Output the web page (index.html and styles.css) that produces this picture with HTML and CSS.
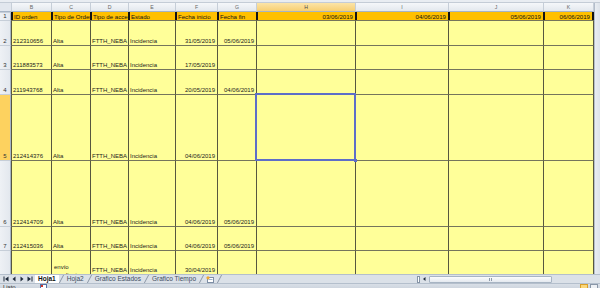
FILE: index.html
```html
<!DOCTYPE html>
<html lang="es">
<head>
<meta charset="utf-8">
<title>Hoja1</title>
<link rel="stylesheet" href="styles.css">
</head>
<body>
<div class="app">
  <div class="topstrip"></div>
  <div class="main">
    <div class="sheet">
      <div class="corner"></div>
      <div class="ch">B</div><div class="ch">C</div><div class="ch">D</div><div class="ch">E</div><div class="ch">F</div><div class="ch">G</div><div class="ch sel">H</div><div class="ch">I</div><div class="ch">J</div><div class="ch last">K</div>

      <div class="rh first">1</div>
      <div class="hd">ID orden</div><div class="hd">Tipo de Orden</div><div class="hd">Tipo de acceso</div><div class="hd">Estado</div><div class="hd">Fecha inicio</div><div class="hd">Fecha fin</div><div class="hd r">03/06/2019</div><div class="hd r">04/06/2019</div><div class="hd r">05/06/2019</div><div class="hd r last">06/06/2019</div>

      <div class="rh">2</div>
      <div class="c">212310656</div><div class="c">Alta</div><div class="c">FTTH_NEBA</div><div class="c">Incidencia</div><div class="c r">31/05/2019</div><div class="c r">05/06/2019</div><div class="c"></div><div class="c"></div><div class="c"></div><div class="c last"></div>

      <div class="rh">3</div>
      <div class="c">211883573</div><div class="c">Alta</div><div class="c">FTTH_NEBA</div><div class="c">Incidencia</div><div class="c r">17/05/2019</div><div class="c r"></div><div class="c"></div><div class="c"></div><div class="c"></div><div class="c last"></div>

      <div class="rh">4</div>
      <div class="c">211943768</div><div class="c">Alta</div><div class="c">FTTH_NEBA</div><div class="c">Incidencia</div><div class="c r">20/05/2019</div><div class="c r">04/06/2019</div><div class="c"></div><div class="c"></div><div class="c"></div><div class="c last"></div>

      <div class="rh sel">5</div>
      <div class="c">212414376</div><div class="c">Alta</div><div class="c">FTTH_NEBA</div><div class="c">Incidencia</div><div class="c r">04/06/2019</div><div class="c r"></div><div class="c selc"></div><div class="c"></div><div class="c"></div><div class="c last"></div>

      <div class="rh">6</div>
      <div class="c">212414709</div><div class="c">Alta</div><div class="c">FTTH_NEBA</div><div class="c">Incidencia</div><div class="c r">04/06/2019</div><div class="c r">05/06/2019</div><div class="c"></div><div class="c"></div><div class="c"></div><div class="c last"></div>

      <div class="rh">7</div>
      <div class="c">212415036</div><div class="c">Alta</div><div class="c">FTTH_NEBA</div><div class="c">Incidencia</div><div class="c r">04/06/2019</div><div class="c r">05/06/2019</div><div class="c"></div><div class="c"></div><div class="c"></div><div class="c last"></div>

      <div class="rh">8</div>
      <div class="c top"></div><div class="c top wrap">envío<br>pendiente</div><div class="c top">FTTH_NEBA</div><div class="c top">Incidencia</div><div class="c top r">30/04/2019</div><div class="c top r"></div><div class="c top"></div><div class="c top"></div><div class="c top"></div><div class="c top last"></div>
    </div>
    <div class="vscroll"></div>
  </div>

  <div class="tabbar">
    <div class="nav">
      <svg width="6" height="6" viewBox="0 0 6 6"><rect x="0.5" y="0.5" width="1" height="5" fill="#1f2b3b"/><path d="M5.5 0.5 L2 3 L5.5 5.5Z" fill="#1f2b3b"/></svg>
      <svg width="6" height="6" viewBox="0 0 6 6"><path d="M4.5 0.5 L1.5 3 L4.5 5.5Z" fill="#1f2b3b"/></svg>
      <svg width="6" height="6" viewBox="0 0 6 6"><path d="M1.5 0.5 L4.5 3 L1.5 5.5Z" fill="#1f2b3b"/></svg>
      <svg width="6" height="6" viewBox="0 0 6 6"><path d="M0.5 0.5 L4 3 L0.5 5.5Z" fill="#1f2b3b"/><rect x="4.5" y="0.5" width="1" height="5" fill="#1f2b3b"/></svg>
    </div>
    <div class="tabs">
      <span class="tab active">Hoja1</span><span class="sep"></span>
      <span class="tab">Hoja2</span><span class="sep"></span>
      <span class="tab">Grafico Estados</span><span class="sep"></span>
      <span class="tab">Grafico Tiempo</span><span class="sep"></span>
      <span class="tab newsheet"><svg width="9" height="7" viewBox="0 0 9 7"><rect x="1.5" y="1.5" width="6" height="5" fill="#fff" stroke="#7d8ea5"/><rect x="2.5" y="3" width="4" height="1" fill="#9fb4cf"/><circle cx="2" cy="1.8" r="1.6" fill="#f0a630"/></svg></span><span class="sep"></span>
    </div>
    <div class="spacer"></div>
    <div class="hscroll">
      <span class="split"></span>
      <svg class="larrow" width="5" height="6" viewBox="0 0 5 6"><path d="M3.5 1 L1 3 L3.5 5Z" fill="#1f2b3b"/></svg>
      <span class="thumb"><span class="grip"></span></span>
      <span class="track"></span>
    </div>
  </div>

  <div class="status">
    <span class="ready">Listo</span>
    <svg class="macro" width="7" height="5" viewBox="0 0 7 5"><rect x="0.5" y="0.5" width="6" height="5" fill="#fff" stroke="#5572a6"/><rect x="1" y="1" width="2" height="2" fill="#d0342c"/></svg>
    <span class="sspacer"></span>
    <span class="view on"></span><span class="view"></span>
  </div>
</div>
</body>
</html>
```
FILE: styles.css
```css
* {
  box-sizing: border-box;
  margin: 0;
  padding: 0;
}

html, body {
  width: 600px;
  height: 288px;
  overflow: hidden;
  background: #fff;
}

body {
  font-family: "Liberation Sans", Arial, sans-serif;
}

.app {
  width: 600px;
  height: 288px;
  display: flex;
  flex-direction: column;
  overflow: hidden;
}

.topstrip {
  flex: none;
  height: 3px;
  background: #e9edf2;
  border-bottom: 1px solid #c4ccd6;
}

.main {
  flex: none;
  height: 271px;
  display: flex;
}

.sheet {
  width: 594px;
  height: 271px;
  overflow: hidden;
  display: grid;
  grid-template-columns: 11px 40px 39px 38px 47px 42px 39px 99px 93px 95px 51px;
  grid-template-rows: 9px 8px 25px 24px 25px 66px 66px 24px 40px;
}

.vscroll {
  width: 6px;
  height: 271px;
  background: linear-gradient(90deg, #e9edf2, #dde3ea);
  border-left: 1px solid #b3bdca;
}

/* column headers */
.corner {
  background: #e2e7ee;
  border-bottom: 1px solid #a6b4c5;
}

.ch {
  background: linear-gradient(#f5f7fa, #e3e8ee);
  border-left: 1px solid #c6ced8;
  border-bottom: 1px solid #a6b4c5;
  color: #666;
  font-size: 5.2px;
  line-height: 6px;
  display: flex;
  align-items: center;
  justify-content: center;
}

.ch.sel {
  background: linear-gradient(#fbe4a8, #f7cf72);
  color: #4a4a4a;
}

.ch.last {
  border-right: 1px solid #c6ced8;
}

/* row headers */
.rh {
  background: linear-gradient(90deg, #eef1f5, #e3e8ee);
  border-top: 1px solid #c6ced8;
  border-right: 1px solid #a6b4c5;
  color: #333;
  font-size: 6px;
  line-height: 7px;
  display: flex;
  align-items: flex-end;
  justify-content: center;
}

.rh.first {
  align-items: center;
}

.rh.sel {
  background: #fdd25f;
}

/* row 1 headings */
.hd {
  background: #ffc000;
  border-left: 2px solid #141414;
  color: #111;
  font-size: 6.1px;
  line-height: 7px;
  display: flex;
  align-items: center;
  padding: 0 2px 0 1px;
  white-space: nowrap;
  overflow: hidden;
}

.hd.r {
  justify-content: flex-end;
}

.hd.last {
  border-right: 2px solid #141414;
}

/* body cells */
.c {
  background: #ffff99;
  border-left: 1px solid #57573f;
  border-top: 1px solid #75755c;
  color: #1c1c1c;
  font-size: 6px;
  line-height: 7px;
  display: flex;
  align-items: flex-end;
  padding: 0 2px 0 1px;
  white-space: nowrap;
  overflow: hidden;
}

.c.r {
  justify-content: flex-end;
}

.c.last {
  border-right: 1px solid #57573f;
}

.c.top {
  align-items: flex-start;
  padding-top: 16px;
}

.c.wrap {
  padding-top: 12px;
  padding-left: 2px;
  white-space: normal;
  line-height: 8px;
}

.c.selc {
  position: relative;
  z-index: 2;
  overflow: visible;
  outline: 2px solid #5d6ec8;
  outline-offset: -1px;
}

.c.selc::after {
  content: "";
  position: absolute;
  right: -2px;
  bottom: -2px;
  width: 3px;
  height: 3px;
  background: #5d6ec8;
}

/* sheet tabs */
.tabbar {
  flex: none;
  height: 9px;
  display: flex;
  align-items: stretch;
  background: #dbe1e8;
  border-top: 1px solid #b4bfcc;
  font-size: 6.5px;
}

.nav {
  width: 35px;
  display: flex;
  align-items: center;
  gap: 2px;
  padding-left: 3px;
}

.tabs {
  display: flex;
  align-items: stretch;
}

.tab {
  display: flex;
  align-items: center;
  padding: 0 3px;
  color: #3d4c60;
  line-height: 8px;
  white-space: nowrap;
}

.tab.active {
  background: #fff;
  color: #111;
  font-weight: bold;
}

.tab.newsheet {
  padding: 0 2px;
}

.sep {
  width: 1px;
  margin: 0 2px;
  background: #8c98a8;
  transform: skewX(-28deg);
}

.spacer {
  flex: 1;
}

.hscroll {
  width: 183px;
  display: flex;
  align-items: center;
}

.split {
  width: 3px;
  height: 7px;
  background: #fff;
  border: 1px solid #8594a6;
}

.larrow {
  margin-left: 2px;
}

.thumb {
  width: 123px;
  height: 7px;
  margin-left: 2px;
  background: linear-gradient(#fbfcfd, #e4e9ef);
  border: 1px solid #a7b4c3;
  border-radius: 1px;
  display: flex;
  align-items: center;
  justify-content: center;
}

.grip {
  width: 4px;
  height: 3px;
  background: repeating-linear-gradient(90deg, #8e9bab 0 1px, transparent 1px 2px);
}

.track {
  flex: 1;
  height: 7px;
}

/* status bar */
.status {
  flex: none;
  height: 5px;
  display: flex;
  align-items: flex-start;
  background: linear-gradient(#d9dfe7, #cfd6df);
  border-top: 1px solid #b4bfcc;
  overflow: hidden;
}

.ready {
  margin-left: 3px;
  font-size: 6px;
  line-height: 7px;
  color: #2a2a2a;
}

.macro {
  margin-left: 24px;
}

.sspacer {
  flex: 1;
}

.view {
  width: 8px;
  height: 5px;
  margin-right: 2px;
  border: 1px solid #8a97a8;
  background: #eef1f5;
}

.view.on {
  background: #fbd77a;
  border-color: #d9a02c;
}
```
